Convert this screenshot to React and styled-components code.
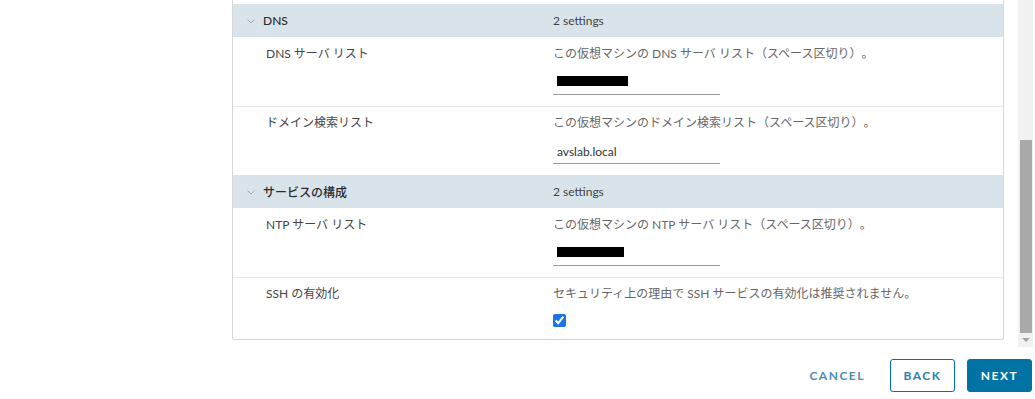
import React from "react";
import styled, { createGlobalStyle } from "styled-components";

const Global = createGlobalStyle`
  html, body {
    margin: 0;
    padding: 0;
    background: #fff;
  }
  body {
    font-family: Lato, "Noto Sans CJK JP", sans-serif;
    font-size: 12px;
    color: #444;
    text-spacing-trim: space-all;
  }
`;

const groups = [
  {
    name: "DNS",
    count: "2 settings",
    rows: [
      {
        label: "DNS サーバ リスト",
        desc: "この仮想マシンの DNS サーバ リスト（スペース区切り）。",
        type: "redacted",
        bar: 71
      },
      {
        label: "ドメイン検索リスト",
        desc: "この仮想マシンのドメイン検索リスト（スペース区切り）。",
        type: "text",
        value: "avslab.local"
      }
    ]
  },
  {
    name: "サービスの構成",
    count: "2 settings",
    rows: [
      {
        label: "NTP サーバ リスト",
        desc: "この仮想マシンの NTP サーバ リスト（スペース区切り）。",
        type: "redacted",
        bar: 67
      },
      {
        label: "SSH の有効化",
        desc: "セキュリティ上の理由で SSH サービスの有効化は推奨されません。",
        type: "check"
      }
    ]
  }
];

const Chevron = () => (
  <svg width="8" height="5" viewBox="0 0 8 5">
    <path d="M0.5 0.5 L4 4 L7.5 0.5" fill="none" stroke="#a0a6aa" strokeWidth="1" />
  </svg>
);

export default function App() {
  return (
    <>
      <Global />
      <Page>
        <ScrollArea>
          <Content>
            <Table>
              <Cut />
              {groups.map(g => (
                <React.Fragment key={g.name}>
                  <GroupHeader>
                    <GroupName>
                      <Chevron />
                      <span>{g.name}</span>
                    </GroupName>
                    <Count>{g.count}</Count>
                  </GroupHeader>
                  {g.rows.map(r => (
                    <Row key={r.label}>
                      <Label>{r.label}</Label>
                      <Cell>
                        <Desc>{r.desc}</Desc>
                        {r.type === "check" ? (
                          <Check type="checkbox" checked readOnly />
                        ) : (
                          <Field>
                            {r.type === "text" ? (
                              r.value
                            ) : (
                              <Redacted style={{ width: r.bar }} />
                            )}
                          </Field>
                        )}
                      </Cell>
                    </Row>
                  ))}
                </React.Fragment>
              ))}
            </Table>
          </Content>
          <Scrollbar>
            <Thumb />
            <DownArrow />
          </Scrollbar>
        </ScrollArea>
        <Footer>
          <FlatButton>CANCEL</FlatButton>
          <OutlineButton>BACK</OutlineButton>
          <PrimaryButton>NEXT</PrimaryButton>
        </Footer>
      </Page>
    </>
  );
}

const Page = styled.div`
  width: 1035px;
  height: 399px;
  display: flex;
  flex-direction: column;
  overflow: hidden;
`;

const ScrollArea = styled.div`
  height: 347px;
  display: flex;
  padding-right: 2px;
`;

const Content = styled.div`
  flex: 1;
  padding: 0 14px 0 232px;
`;

const Table = styled.div`
  border: 1px solid #d6d6d6;
  border-top: none;
  border-radius: 0 0 3px 3px;
`;

const Cut = styled.div`
  height: 4px;
`;

const GroupHeader = styled.div`
  display: grid;
  grid-template-columns: 320px 1fr;
  align-items: center;
  height: 33px;
  background: #d9e3ea;
  color: #2b2b2b;
`;

const GroupName = styled.div`
  display: flex;
  align-items: center;
  gap: 8px;
  padding-left: 14px;
  font-weight: 500;
  svg {
    margin-top: 1px;
  }
`;

const Count = styled.div`
  color: #444;
`;

const Row = styled.div`
  display: grid;
  grid-template-columns: 320px 1fr;
  padding: 8px 0 11px;
  & + & {
    border-top: 1px solid #e8e8e8;
    padding-top: 7px;
  }
`;

const Label = styled.div`
  padding-left: 33px;
  line-height: 18px;
  color: #444;
`;

const Cell = styled.div`
  display: flex;
  flex-direction: column;
  align-items: flex-start;
`;

const Desc = styled.div`
  line-height: 18px;
  color: #666;
`;

const Field = styled.div`
  margin-top: 8px;
  width: 167px;
  height: 24px;
  box-sizing: border-box;
  border-bottom: 1px solid #9a9a9a;
  padding: 0 5px 0 4px;
  display: flex;
  align-items: center;
  color: #333;
`;

const Redacted = styled.span`
  display: block;
  height: 10px;
  margin-top: -4px;
  background: #000;
`;

const Check = styled.input`
  margin: 11px 0 1px 0;
  width: 13px;
  height: 13px;
  accent-color: #1a73e8;
`;

const Scrollbar = styled.div`
  width: 15px;
  background: #f1f1f1;
  display: flex;
  flex-direction: column;
  align-items: center;
  padding-top: 140px;
  box-sizing: border-box;
`;

const Thumb = styled.div`
  width: 12px;
  height: 193px;
  background: #a9a9a9;
`;

const DownArrow = styled.div`
  margin-top: 5px;
  width: 0;
  height: 0;
  border-left: 4px solid transparent;
  border-right: 4px solid transparent;
  border-top: 4px solid #a3a3a3;
`;

const Footer = styled.div`
  display: flex;
  justify-content: flex-end;
  align-items: flex-start;
  gap: 12px;
  padding: 12px 3px 0 0;
`;

const BaseButton = styled.button`
  height: 33px;
  min-width: 65px;
  padding: 0 12px;
  box-sizing: border-box;
  border-radius: 3px;
  font-family: Lato, "Noto Sans CJK JP", sans-serif;
  font-size: 12px;
  font-weight: 700;
  letter-spacing: 1.5px;
  cursor: pointer;
`;

const FlatButton = styled(BaseButton)`
  background: transparent;
  border: 1px solid transparent;
  color: #4a8db3;
  min-width: 76px;
`;

const OutlineButton = styled(BaseButton)`
  background: #fff;
  border: 1px solid #0072a3;
  color: #2f7fae;
`;

const PrimaryButton = styled(BaseButton)`
  background: #0072a3;
  border: 1px solid #0072a3;
  color: #fff;
`;
